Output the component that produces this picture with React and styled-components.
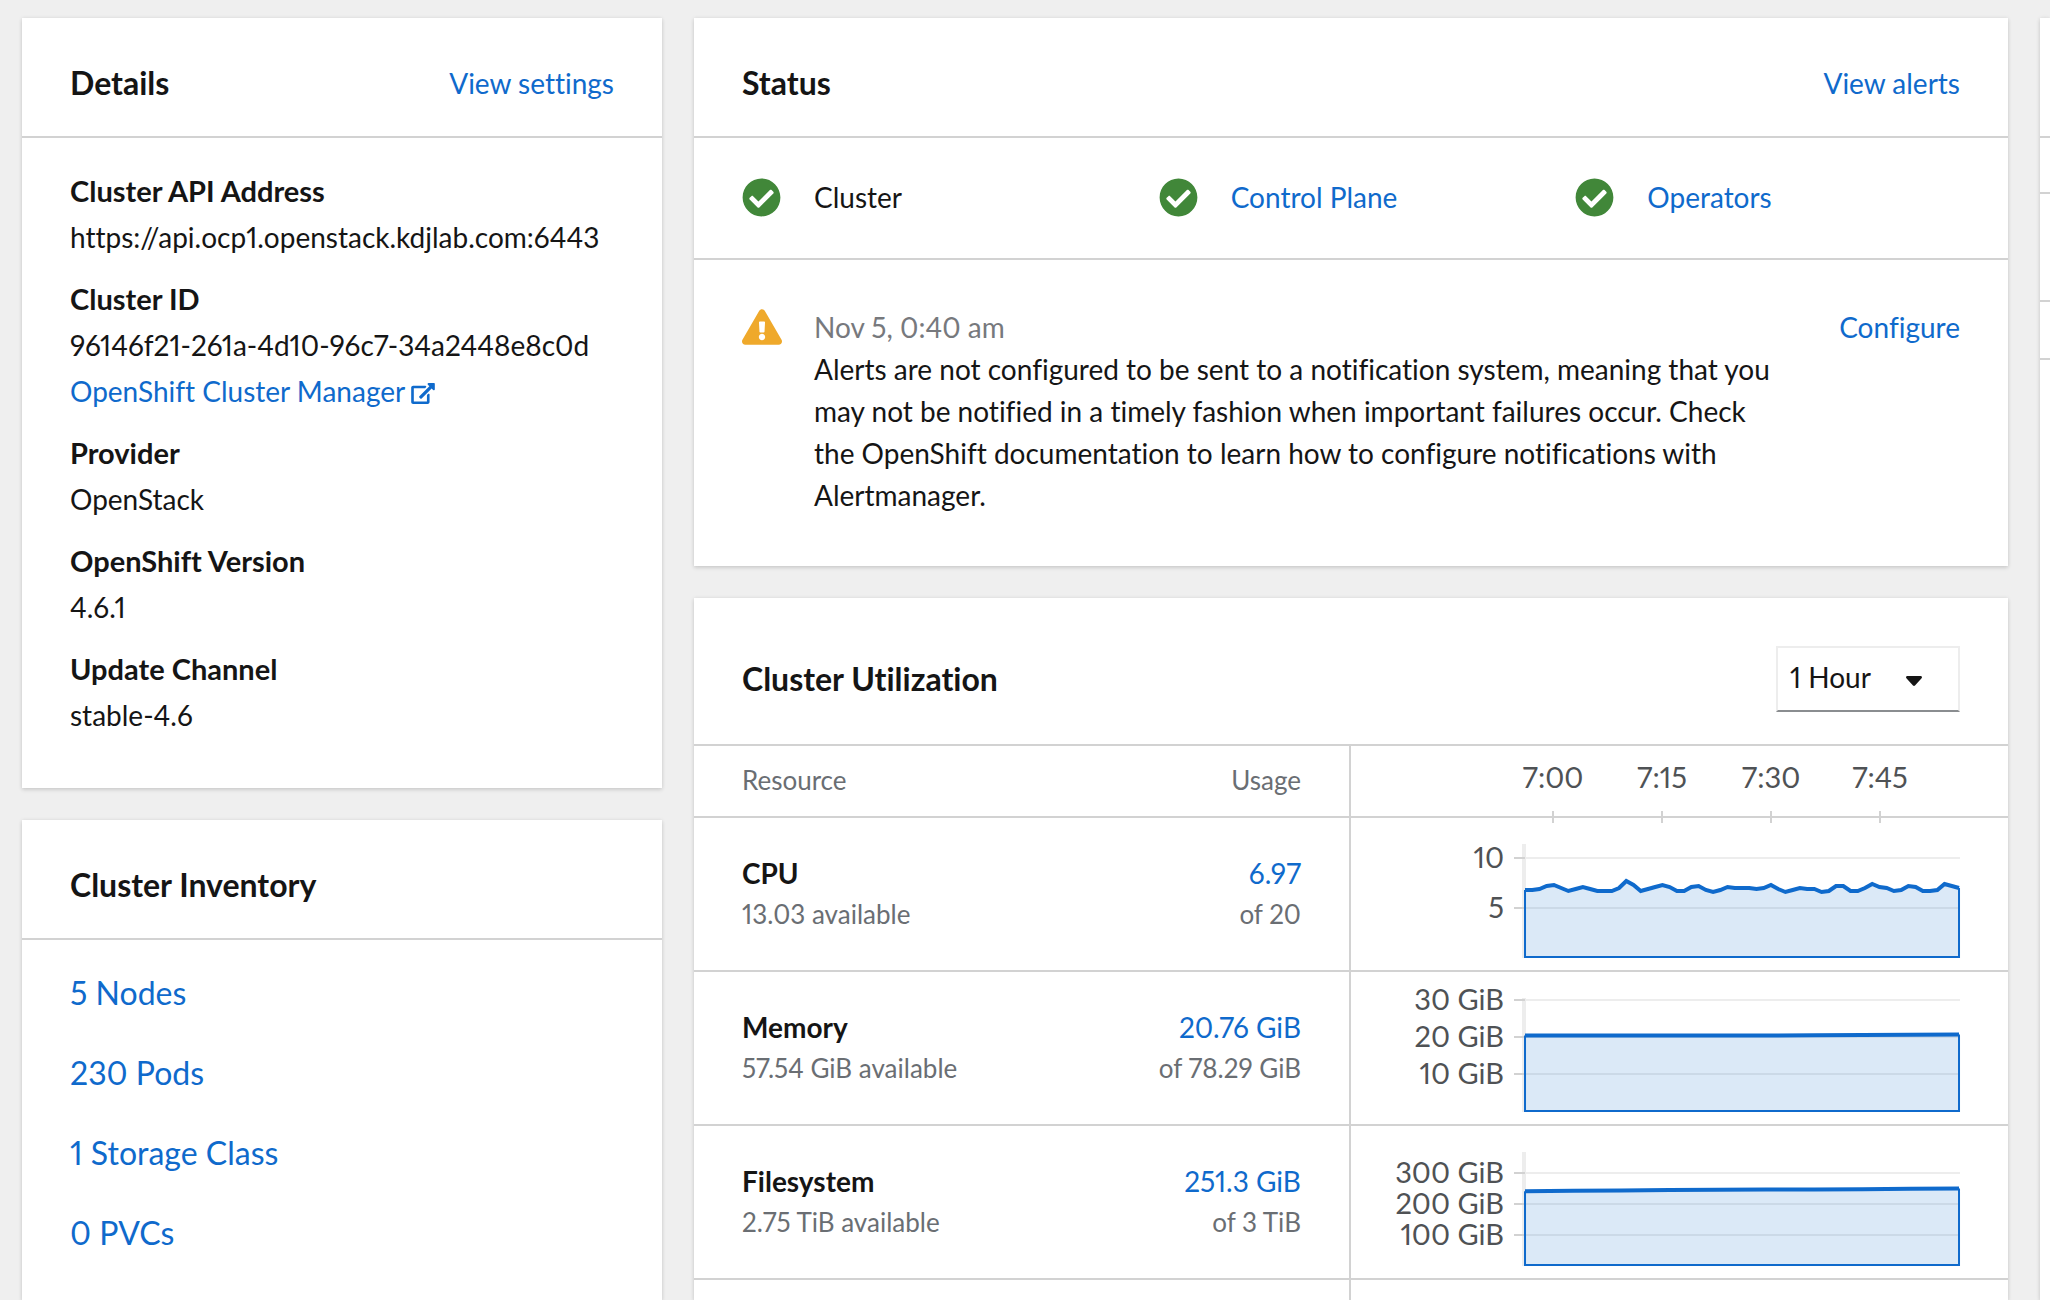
import React from "react";
import styled, { createGlobalStyle } from "styled-components";
import { FaCheckCircle, FaExclamationTriangle } from "react-icons/fa";

const color = {
  page: "#efefef",
  card: "#ffffff",
  text: "#151515",
  muted: "#6a6e73",
  axis: "#4f5255",
  link: "#0f6acc",
  line: "#d2d2d2",
  grid: "#ededed",
  green: "#418739",
  amber: "#efa92b",
};

const GlobalStyle = createGlobalStyle`
  *, *::before, *::after { box-sizing: border-box; }
  body {
    margin: 0;
    background: ${color.page};
    color: ${color.text};
    font-family: Lato, "Liberation Sans", sans-serif;
    font-size: 28px;
    font-variant-ligatures: none;
    font-variant-numeric: proportional-nums;
    line-height: 42px;
  }
`;

const Page = styled.div`
  display: flex;
  gap: 32px;
  min-height: 100vh;
  padding: 18px 0 0 22px;
  overflow: hidden;
`;

const SideColumn = styled.aside`
  display: flex;
  flex: 0 0 640px;
  flex-direction: column;
  gap: 32px;
`;

const MainColumn = styled.main`
  display: flex;
  flex: 1 1 0;
  flex-direction: column;
  gap: 32px;
  min-width: 0;
`;

const EdgeColumn = styled.aside`
  display: flex;
  flex: 0 0 10px;
`;

const Card = styled.section`
  flex: ${(p) => (p.$grow ? "1 0 auto" : "0 0 auto")};
  background: ${color.card};
  box-shadow: 0 2px 4px rgba(3, 3, 3, 0.12), 0 0 4px rgba(3, 3, 3, 0.08);
`;

const CardHeader = styled.header`
  display: flex;
  align-items: center;
  justify-content: space-between;
  padding: ${(p) => (p.$withControl ? "48px 48px 32px" : "46px 48px 34px")};
  border-bottom: 2px solid ${color.line};
`;

const CardTitle = styled.h2`
  margin: 0;
  font-size: 32px;
  font-weight: 700;
  line-height: 38px;
`;

const Link = styled.a`
  color: ${color.link};
  text-decoration: none;
`;

const HeaderLink = styled(Link)`
  line-height: 38px;
`;

const DetailList = styled.dl`
  margin: 0;
  padding: 32px 48px;
`;

const DetailTerm = styled.dt`
  margin-bottom: 4px;
  font-size: 29px;
  font-weight: 700;
`;

const DetailValue = styled.dd`
  margin: 0 0 4px;
  white-space: nowrap;

  & + dt {
    margin-top: 20px;
  }

  &:last-child {
    margin-bottom: 20px;
  }
`;

const ExternalIcon = styled.svg`
  width: 24px;
  height: 21px;
  margin-left: 6px;
  vertical-align: -2px;
  fill: currentColor;
`;

const InventoryList = styled.ul`
  margin: 0;
  padding: 13px 48px 0;
  list-style: none;
`;

const InventoryItem = styled.li`
  padding: 16px 0;
  font-size: 32px;
  line-height: 48px;
`;

const HealthRow = styled.ul`
  display: grid;
  grid-template-columns: repeat(3, 1fr);
  gap: 32px;
  margin: 0;
  padding: 38px 48px 40px;
  border-bottom: 2px solid ${color.line};
  list-style: none;
`;

const HealthItem = styled.li`
  display: flex;
  align-items: center;
  gap: 33px;
`;

const HealthIcon = styled(FaCheckCircle)`
  width: 39px;
  height: 39px;
  color: ${color.green};
`;

const Alert = styled.div`
  display: flex;
  gap: 32px;
  align-items: flex-start;
  padding: 46px 48px 50px;
`;

const AlertIcon = styled(FaExclamationTriangle)`
  flex: none;
  width: 40px;
  height: 36px;
  margin-top: 3px;
  color: ${color.amber};
`;

const AlertBody = styled.div`
  flex: 1;
  padding-right: 20px;
`;

const AlertTime = styled.time`
  display: block;
  color: #77797d;
`;

const AlertText = styled.p`
  margin: 0;
`;

const SelectBox = styled.div`
  position: relative;
`;

const DurationSelect = styled.select`
  display: block;
  width: 184px;
  height: 66px;
  padding: 0 48px 4px 12px;
  border: 2px solid ${color.grid};
  border-bottom-color: #8a8d90;
  border-radius: 0;
  appearance: none;
  background: ${color.card};
  color: ${color.text};
  font: inherit;
`;

const SelectCaret = styled.svg`
  position: absolute;
  top: 30px;
  right: 38px;
  width: 16px;
  height: 10px;
  fill: ${color.text};
  pointer-events: none;
`;

const UsageTable = styled.table`
  width: 100%;
  table-layout: fixed;
  border-collapse: separate;
  border-spacing: 0;
`;

const ResourceCol = styled.col`
  width: 28%;
`;

const UsageCol = styled.col`
  width: 22%;
`;

const HeadCell = styled.th`
  padding: ${(p) => (p.$usage ? "14px 48px 16px 0" : "14px 0 16px 48px")};
  border-right: ${(p) => (p.$usage ? `2px solid ${color.line}` : "0")};
  border-bottom: 2px solid ${color.line};
  color: ${color.muted};
  font-size: 26px;
  font-weight: 400;
  line-height: 40px;
  text-align: ${(p) => (p.$usage ? "right" : "left")};
`;

const ResourceCell = styled.th`
  padding: 34px 0 36px 48px;
  border-bottom: 2px solid ${color.line};
  font-weight: 700;
  text-align: left;
`;

const UsageCell = styled.td`
  padding: 34px 48px 36px 0;
  border-right: 2px solid ${color.line};
  border-bottom: 2px solid ${color.line};
  text-align: right;
`;

const ChartCell = styled.td`
  padding: 0;
  border-bottom: 2px solid ${color.line};
`;

const Primary = styled.div``;

const Secondary = styled.div`
  color: ${color.muted};
  font-size: 26px;
  font-weight: 400;
  line-height: 40px;
`;

const Chart = styled.svg`
  display: block;
  width: 100%;
  height: ${(p) => p.$height}px;
  overflow: visible;
`;

const AxisText = styled.text`
  fill: ${color.axis};
  font-size: 29px;
  text-anchor: ${(p) => p.$anchor};
`;

const TailCell = styled.td`
  height: 20px;
  padding: 0;
  border-right: ${(p) => (p.$divider ? `2px solid ${color.line}` : "0")};
`;

const EdgeCard = styled(Card)`
  flex: 1;
`;

const EdgeBand = styled.div`
  height: ${(p) => p.$height}px;
  border-bottom: 2px solid ${color.line};
`;

const PLOT = { left: 174, right: 608, top: 26, bottom: 139 };

const cpuTrace = [
  72, 72, 71, 68, 67, 70, 73, 71, 69, 71, 73, 73, 73, 70, 63, 67, 73, 71, 69, 67,
  69, 73, 73, 69, 68, 72, 74, 72, 69, 70, 70, 70, 71, 70, 67, 71, 74, 72, 70, 71,
  71, 74, 73, 68, 68, 73, 73, 70, 66, 69, 70, 73, 72, 68, 69, 73, 73, 72, 66, 68,
  70,
];

const resources = [
  {
    name: "CPU",
    available: "13.03 available",
    used: "6.97",
    total: "of 20",
    ticks: [["10", 40], ["5", 90]],
    trace: cpuTrace,
  },
  {
    name: "Memory",
    available: "57.54 GiB available",
    used: "20.76 GiB",
    total: "of 78.29 GiB",
    ticks: [["30 GiB", 28], ["20 GiB", 65], ["10 GiB", 102]],
    trace: [63.6, 63.4, 63.6, 63.4, 63.4, 63.6, 63.2, 63, 62.8, 62.6],
  },
  {
    name: "Filesystem",
    available: "2.75 TiB available",
    used: "251.3 GiB",
    total: "of 3 TiB",
    ticks: [["300 GiB", 47], ["200 GiB", 78], ["100 GiB", 109]],
    trace: [65.2, 64.8, 64.4, 64, 63.8, 63.4, 63.4, 63.2, 62.8, 62.4],
  },
];

const times = [["7:00", 202], ["7:15", 311], ["7:30", 420], ["7:45", 529]];

function UsageChart({ name, ticks, trace }) {
  const step = (PLOT.right - PLOT.left) / (trace.length - 1);
  const points = trace.map((y, i) => `${PLOT.left + i * step},${y}`).join(" L");
  const first = trace[0];
  const last = trace[trace.length - 1];
  return (
    <Chart $height={152} viewBox="0 0 657 152" preserveAspectRatio="xMaxYMid meet" role="img" aria-label={`${name} usage`}>
      <rect x={PLOT.left - 3} y={PLOT.top} width="4" height={PLOT.bottom - PLOT.top + 1} fill={color.grid} />
      {ticks.map(([label, y]) => (
        <g key={label}>
          <rect x={PLOT.left} y={y - 1} width={PLOT.right - PLOT.left + 1} height="2" fill={color.grid} />
          <rect x={PLOT.left - 11} y={y - 1} width="11" height="2" fill={color.line} />
          <AxisText x={PLOT.left - 21} y={y + 10} $anchor="end">{label}</AxisText>
        </g>
      ))}
      <path d={`M${points} V${PLOT.bottom} H${PLOT.left} Z`} fill={color.link} fillOpacity="0.15" />
      <path
        d={`M${PLOT.left},${first} V${PLOT.bottom} H${PLOT.right} V${last}`}
        fill="none"
        stroke={color.link}
        strokeWidth="2"
      />
      <path d={`M${points}`} fill="none" stroke={color.link} strokeWidth="4" />
    </Chart>
  );
}

function TimeAxis() {
  return (
    <Chart $height={70} viewBox="0 0 657 70" preserveAspectRatio="xMaxYMid meet" role="img" aria-label="Time">
      {times.map(([label, x]) => (
        <g key={label}>
          <AxisText x={x} y="42" $anchor="middle">{label}</AxisText>
          <rect x={x - 1} y="65" width="2" height="12" fill={color.line} />
        </g>
      ))}
    </Chart>
  );
}

function DetailsCard() {
  return (
    <Card>
      <CardHeader>
        <CardTitle>Details</CardTitle>
        <HeaderLink href="#settings">View settings</HeaderLink>
      </CardHeader>
      <DetailList>
        <DetailTerm>Cluster API Address</DetailTerm>
        <DetailValue>https://api.ocp1.openstack.kdjlab.com:6443</DetailValue>
        <DetailTerm>Cluster ID</DetailTerm>
        <DetailValue>96146f21-261a-4d10-96c7-34a2448e8c0d</DetailValue>
        <DetailValue>
          <Link href="#cluster-manager">
            OpenShift Cluster Manager
            <ExternalIcon viewBox="0 0 576 512" aria-hidden="true">
              <path d="M576 24v127.984c0 21.461-25.96 31.98-40.971 16.971l-35.707-35.709-243.523 243.523c-9.373 9.373-24.568 9.373-33.941 0l-22.627-22.627c-9.373-9.373-9.373-24.569 0-33.941L442.756 76.676l-35.703-35.705C391.982 25.9 402.656 0 424.024 0H552c13.255 0 24 10.745 24 24zM407.029 270.794l-16 16A23.999 23.999 0 0 0 384 303.765V448H64V128h264a24.003 24.003 0 0 0 16.97-7.029l16-16C376.089 89.851 365.381 64 344 64H48C21.49 64 0 85.49 0 112v352c0 26.51 21.49 48 48 48h352c26.51 0 48-21.49 48-48V287.764c0-21.382-25.852-32.09-40.971-16.97z" />
            </ExternalIcon>
          </Link>
        </DetailValue>
        <DetailTerm>Provider</DetailTerm>
        <DetailValue>OpenStack</DetailValue>
        <DetailTerm>OpenShift Version</DetailTerm>
        <DetailValue>4.6.1</DetailValue>
        <DetailTerm>Update Channel</DetailTerm>
        <DetailValue>stable-4.6</DetailValue>
      </DetailList>
    </Card>
  );
}

function InventoryCard() {
  return (
    <Card $grow>
      <CardHeader>
        <CardTitle>Cluster Inventory</CardTitle>
      </CardHeader>
      <InventoryList>
        {["5 Nodes", "230 Pods", "1 Storage Class", "0 PVCs"].map((item) => (
          <InventoryItem key={item}>
            <Link href="#inventory">{item}</Link>
          </InventoryItem>
        ))}
      </InventoryList>
    </Card>
  );
}

function StatusCard() {
  return (
    <Card>
      <CardHeader>
        <CardTitle>Status</CardTitle>
        <HeaderLink href="#alerts">View alerts</HeaderLink>
      </CardHeader>
      <HealthRow>
        <HealthItem>
          <HealthIcon />
          <span>Cluster</span>
        </HealthItem>
        <HealthItem>
          <HealthIcon />
          <Link href="#control-plane">Control Plane</Link>
        </HealthItem>
        <HealthItem>
          <HealthIcon />
          <Link href="#operators">Operators</Link>
        </HealthItem>
      </HealthRow>
      <Alert>
        <AlertIcon />
        <AlertBody>
          <AlertTime>Nov 5, 0:40 am</AlertTime>
          <AlertText>
            Alerts are not configured to be sent to a notification system, meaning that you may not be
            notified in a timely fashion when important failures occur. Check the OpenShift documentation
            to learn how to configure notifications with Alertmanager.
          </AlertText>
        </AlertBody>
        <Link href="#configure">Configure</Link>
      </Alert>
    </Card>
  );
}

function UtilizationCard() {
  return (
    <Card $grow>
      <CardHeader $withControl>
        <CardTitle>Cluster Utilization</CardTitle>
        <SelectBox>
          <DurationSelect aria-label="Duration" defaultValue="1 Hour">
            <option>1 Hour</option>
          </DurationSelect>
          <SelectCaret viewBox="0 0 16 10" aria-hidden="true">
            <path d="M1.4 0h13.2c1.2 0 1.8 1.4 1 2.300L9 9.500c-.5.600-1.500.600-2 0L.400 2.300C-.4 1.400.200 0 1.400 0z" />
          </SelectCaret>
        </SelectBox>
      </CardHeader>
      <UsageTable>
        <colgroup>
          <ResourceCol />
          <UsageCol />
          <col />
        </colgroup>
        <thead>
          <tr>
            <HeadCell scope="col">Resource</HeadCell>
            <HeadCell scope="col" $usage>Usage</HeadCell>
            <ChartCell>
              <TimeAxis />
            </ChartCell>
          </tr>
        </thead>
        <tbody>
          {resources.map((r) => (
            <tr key={r.name}>
              <ResourceCell scope="row">
                <Primary>{r.name}</Primary>
                <Secondary>{r.available}</Secondary>
              </ResourceCell>
              <UsageCell>
                <Primary>
                  <Link href="#usage">{r.used}</Link>
                </Primary>
                <Secondary>{r.total}</Secondary>
              </UsageCell>
              <ChartCell>
                <UsageChart name={r.name} ticks={r.ticks} trace={r.trace} />
              </ChartCell>
            </tr>
          ))}
          <tr>
            <TailCell />
            <TailCell $divider />
            <TailCell />
          </tr>
        </tbody>
      </UsageTable>
    </Card>
  );
}

export default function App() {
  return (
    <>
      <GlobalStyle />
      <Page>
        <SideColumn>
          <DetailsCard />
          <InventoryCard />
        </SideColumn>
        <MainColumn>
          <StatusCard />
          <UtilizationCard />
        </MainColumn>
        <EdgeColumn>
          <EdgeCard>
            <EdgeBand $height={120} />
            <EdgeBand $height={56} />
            <EdgeBand $height={108} />
            <EdgeBand $height={58} />
          </EdgeCard>
        </EdgeColumn>
      </Page>
    </>
  );
}
